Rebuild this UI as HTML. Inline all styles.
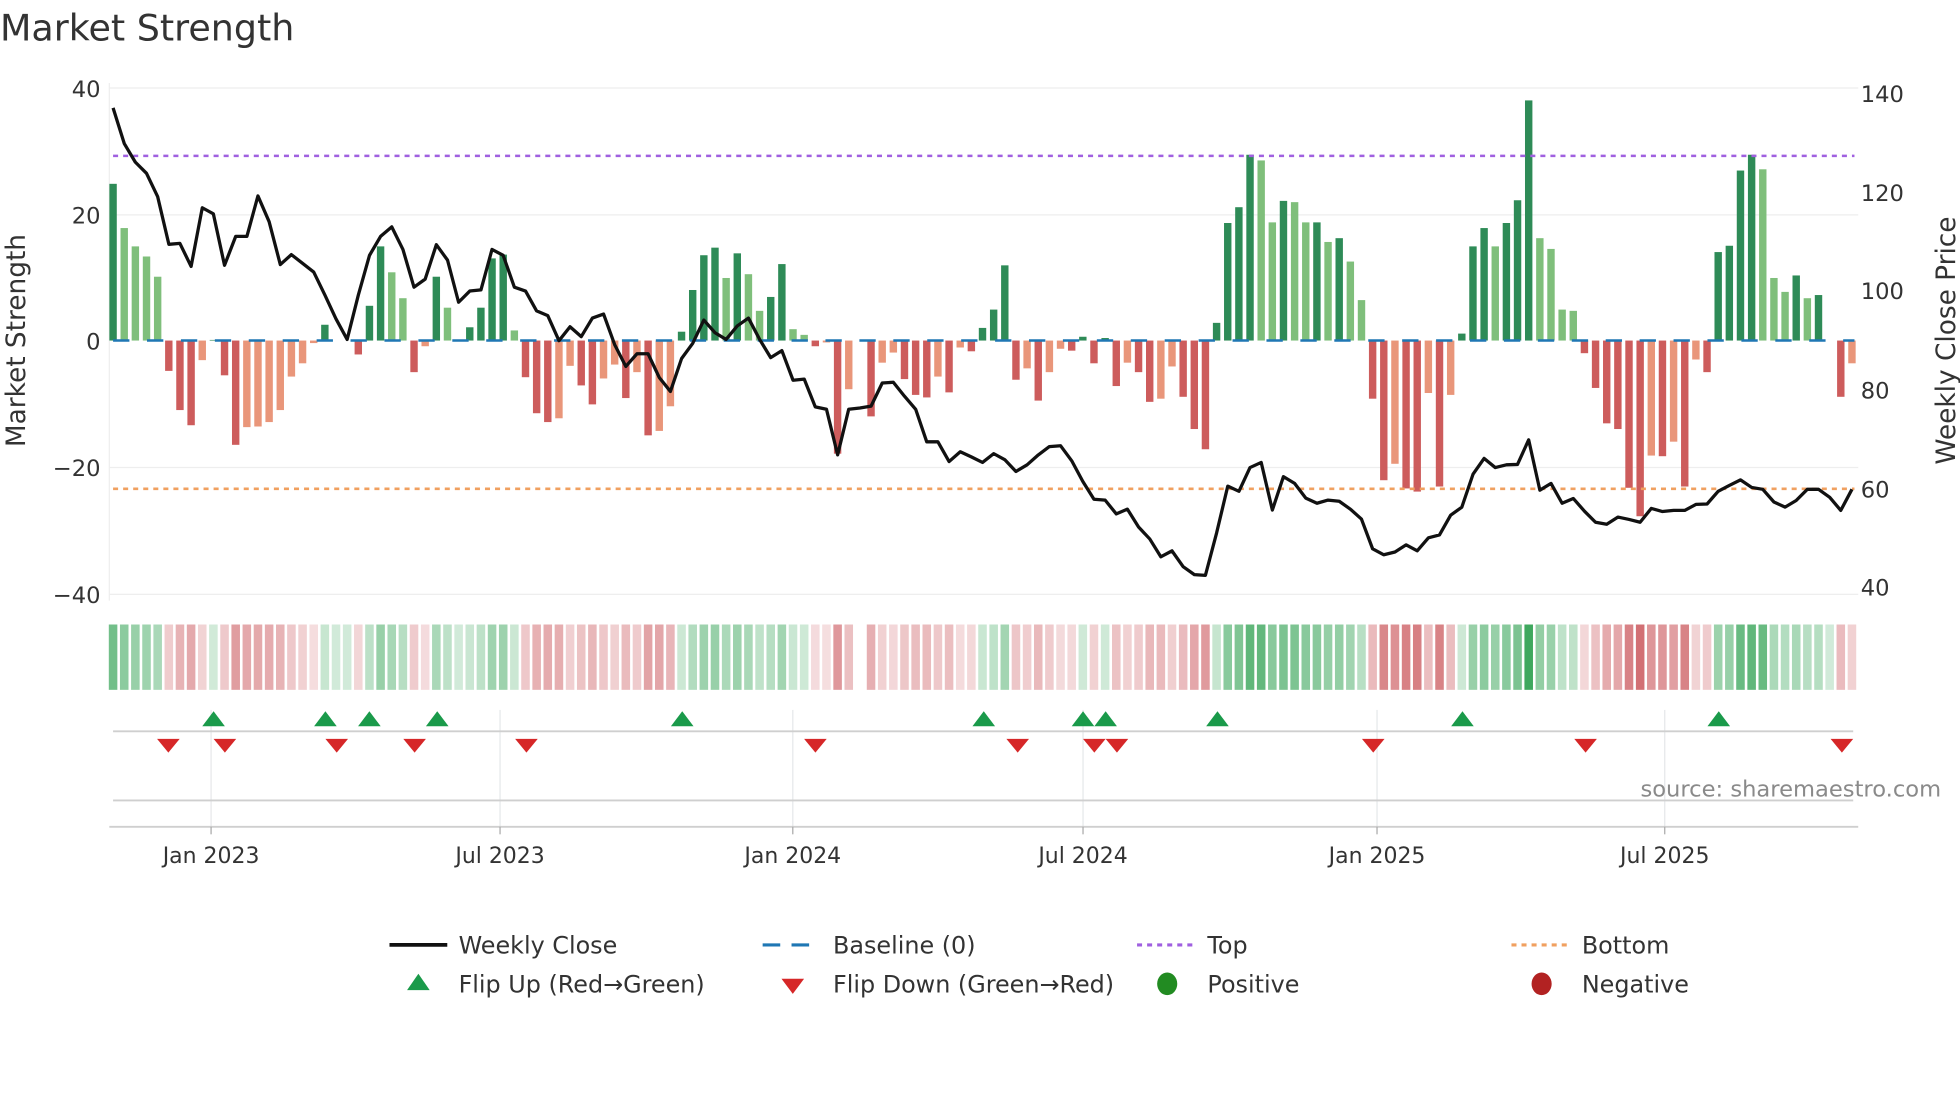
<!DOCTYPE html>
<html><head><meta charset="utf-8"><style>
html,body{margin:0;padding:0;background:#fff;}
svg{display:block;}
text{font-family:"DejaVu Sans","Liberation Sans",sans-serif;fill:#333;}
</style></head><body>
<svg id="s" width="1960" height="1102" viewBox="0 0 1560 877" xmlns="http://www.w3.org/2000/svg">
<rect width="1560" height="877" fill="#fff"/>
<text x="0" y="32" font-size="29">Market Strength</text>
<g stroke="#eeeeee" stroke-width="1">
<line x1="87" y1="70" x2="1479" y2="70"/><line x1="87" y1="171" x2="1479" y2="171"/>
<line x1="87" y1="372" x2="1479" y2="372"/><line x1="87" y1="473" x2="1479" y2="473"/>
<line x1="87" y1="66" x2="87" y2="478"/>
</g>
<g font-size="18" text-anchor="end">
<text x="80" y="77">40</text><text x="80" y="178">20</text><text x="80" y="278">0</text>
<text x="80" y="379">−20</text><text x="80" y="480">−40</text>
</g>
<g font-size="18">
<text x="1481" y="81">140</text><text x="1481" y="160">120</text><text x="1481" y="238">100</text>
<text x="1481" y="317">80</text><text x="1481" y="396">60</text><text x="1481" y="474">40</text>
</g>
<text font-size="21" text-anchor="middle" transform="translate(20,271) rotate(-90)">Market Strength</text>
<text font-size="21" text-anchor="middle" transform="translate(1556,271) rotate(-90)">Weekly Close Price</text>
<g id="bars"></g>
<line x1="90" y1="271" x2="1476" y2="271" stroke="#1f77b4" stroke-width="2" stroke-dasharray="13 14"/>
<line x1="90" y1="124" x2="1476" y2="124" stroke="#a060e0" stroke-width="2" stroke-dasharray="4 4"/>
<line x1="90" y1="389" x2="1476" y2="389" stroke="#f0a060" stroke-width="2" stroke-dasharray="4 4"/>
<polyline id="price" fill="none" stroke="#111" stroke-width="2.6" stroke-linejoin="round"/>
<g id="strip"></g>
<g stroke="#e6e8ea" stroke-width="1">
<line x1="168" y1="565" x2="168" y2="658"/><line x1="398" y1="565" x2="398" y2="658"/>
<line x1="631" y1="565" x2="631" y2="658"/><line x1="862" y1="565" x2="862" y2="658"/>
<line x1="1096" y1="565" x2="1096" y2="658"/><line x1="1325" y1="565" x2="1325" y2="658"/>
</g>
<line x1="90" y1="582" x2="1475" y2="582" stroke="#cfcfcf" stroke-width="1.5"/>
<line x1="90" y1="637" x2="1475" y2="637" stroke="#cfcfcf" stroke-width="1.5"/>
<line x1="87" y1="658" x2="1479" y2="658" stroke="#cfcfcf" stroke-width="1.5"/>
<g stroke="#aaa" stroke-width="1">
<line x1="168" y1="658" x2="168" y2="664"/><line x1="398" y1="658" x2="398" y2="664"/>
<line x1="631" y1="658" x2="631" y2="664"/><line x1="862" y1="658" x2="862" y2="664"/>
<line x1="1096" y1="658" x2="1096" y2="664"/><line x1="1325" y1="658" x2="1325" y2="664"/>
</g>
<g id="marks"></g>
<text x="1545" y="634" font-size="18" text-anchor="end" style="fill:#8a8a8a">source: sharemaestro.com</text>
<g font-size="17.5" text-anchor="middle">
<text x="168" y="687">Jan 2023</text><text x="398" y="687">Jul 2023</text><text x="631" y="687">Jan 2024</text>
<text x="862" y="687">Jul 2024</text><text x="1096" y="687">Jan 2025</text><text x="1325" y="687">Jul 2025</text>
</g>
<g font-size="19">
<line x1="310" y1="752" x2="356" y2="752" stroke="#111" stroke-width="3"/>
<text x="365" y="759">Weekly Close</text>
<line x1="607" y1="752" x2="652" y2="752" stroke="#1f77b4" stroke-width="2.5" stroke-dasharray="14 9"/>
<text x="663" y="759">Baseline (0)</text>
<line x1="905" y1="752" x2="950" y2="752" stroke="#a060e0" stroke-width="2.5" stroke-dasharray="4 4"/>
<text x="961" y="759">Top</text>
<line x1="1203" y1="752" x2="1248" y2="752" stroke="#f0a060" stroke-width="2.5" stroke-dasharray="4 4"/>
<text x="1259" y="759">Bottom</text>
<polygon points="324,788 342,788 333,775" fill="#1a9a4a"/>
<text x="365" y="790">Flip Up (Red→Green)</text>
<polygon points="622,779 640,779 631,791" fill="#d62728"/>
<text x="663" y="790">Flip Down (Green→Red)</text>
<ellipse cx="929" cy="783" rx="8" ry="9" fill="#228b22"/>
<text x="961" y="790">Positive</text>
<ellipse cx="1227" cy="783" rx="8" ry="9" fill="#b22222"/>
<text x="1259" y="790">Negative</text>
</g>
</svg>
<script>
var d="24.8D 17.8L 14.9L 13.3L 10.1L -4.8R -11R -13.4R -3.1S 0.1D -5.5R -16.5R -13.7S -13.6S -12.9S -11S -5.7S -3.6S -0.4S 2.5D 0Z 0Z -2.2R 5.5D 14.9D 10.8L 6.7L -5R -0.9S 10.1D 5.2L 0Z 2.1D 5.2D 13D 13.6D 1.6L -5.8R -11.5R -12.9R -12.3S -4S -7.1R -10.1R -6S -3.8S -9.1R -5S -15R -14.3S -10.4S 1.4D 8D 13.5D 14.7D 9.9L 13.8D 10.5L 4.7L 6.9D 12.1D 1.8L 0.9L -0.9R -0.3S -17.9R -7.7S 0X -12R -3.5S -1.9S -6.1R -8.6R -9R -5.7S -8.2R -1.1S -1.7R 2D 4.9D 11.9D -6.2R -4.4S -9.5R -5S -1.3S -1.6R 0.6D -3.6R 0.4D -7.2R -3.5S -5R -9.7R -9.2S -4.1S -8.9R -14R -17.2R 2.8D 18.6D 21.1D 29.4D 28.5L 18.7L 22.1D 21.9L 18.7L 18.7D 15.6L 16.2D 12.5L 6.4L -9.2R -22.1R -19.5S -23.4R -23.9R -8.3S -23.1R -8.6S 1.1D 14.9D 17.8D 14.9L 18.6D 22.2D 38D 16.2L 14.5L 4.9L 4.7L -2R -7.5R -13.1R -14R -23.3R -27.8R -18.2S -18.3R -16S -23.1R -3S -5R 14D 15D 26.9D 29.4D 27.1L 9.9L 7.7L 10.3D 6.7L 7.2D 0Z -8.9R -3.6S".split(" ");
var p=[68,158,205,233,292,412,410,468,320,335,465,392,392,290,355,463,438,460,482,540,600,652,540,440,392,368,425,520,500,413,452,558,530,527,425,440,520,530,580,592,655,620,645,598,588,665,720,688,688,748,783,700,662,603,635,652,618,598,652,698,680,755,752,822,828,943,828,825,820,762,760,795,828,910,910,960,935,948,962,940,955,985,968,943,922,920,958,1010,1055,1057,1092,1080,1125,1155,1200,1185,1225,1245,1247,1140,1022,1035,975,962,1082,998,1015,1052,1065,1057,1060,1080,1105,1180,1195,1188,1170,1185,1152,1145,1095,1075,992,952,975,968,967,905,1032,1015,1065,1053,1085,1113,1118,1100,1106,1113,1078,1086,1083,1083,1068,1067,1035,1020,1006,1025,1030,1062,1075,1058,1030,1030,1050,1083,1030];
var col={D:"#2e8b57",L:"#7fbf7b",R:"#cd5c5c",S:"#e9967a",Z:"#7fbf7b",X:"#fff"};
var ns="http://www.w3.org/2000/svg",B=document.getElementById("bars"),S=document.getElementById("strip");
function el(t,a,par){var e=document.createElementNS(ns,t);for(var k in a)e.setAttribute(k,a[k]);par.appendChild(e);return e;}
var step=(1474-90)/156,pts=[];
for(var i=0;i<d.length;i++){
 var v=parseFloat(d[i]),c=d[i].slice(-1),x=90+step*i;
 var y0=271,y1=271-v*5.03;
 if(Math.abs(v)>0.05) el("rect",{x:x-2.95,y:Math.min(y0,y1),width:5.9,height:Math.abs(y1-y0),fill:col[c]},B);
 if(c!="X"){
  var t=Math.min(Math.abs(v)/38,1),a=0.22+0.7*t,r,g,b;
  if(v>=0&&c!="R"&&c!="S"){r=46;g=160;b=80;}else{r=205;g=95;b=100;a=0.2+0.75*Math.min(Math.abs(v)/30,1);}
  var R=Math.round(255-(255-r)*a),G=Math.round(255-(255-g)*a),Bb=Math.round(255-(255-b)*a);
  el("rect",{x:x-3.4,y:497,width:6.8,height:52,fill:"rgb("+R+","+G+","+Bb+")"},S);
 }
 pts.push(x.toFixed(1)+","+(70+(p[i]-18)/3.168).toFixed(1));
}
document.getElementById("price").setAttribute("points",pts.join(" "));
var M=document.getElementById("marks");
[170,259,294,348,543,783,862,880,969,1164,1368].forEach(function(x){el("polygon",{points:(x-9)+",578 "+(x+9)+",578 "+x+",566",fill:"#1a9a4a"},M);});
[134,179,268,330,419,649,810,871,889,1093,1262,1466].forEach(function(x){el("polygon",{points:(x-9)+",588 "+(x+9)+",588 "+x+",599",fill:"#d62728"},M);});
</script>
</body></html>
